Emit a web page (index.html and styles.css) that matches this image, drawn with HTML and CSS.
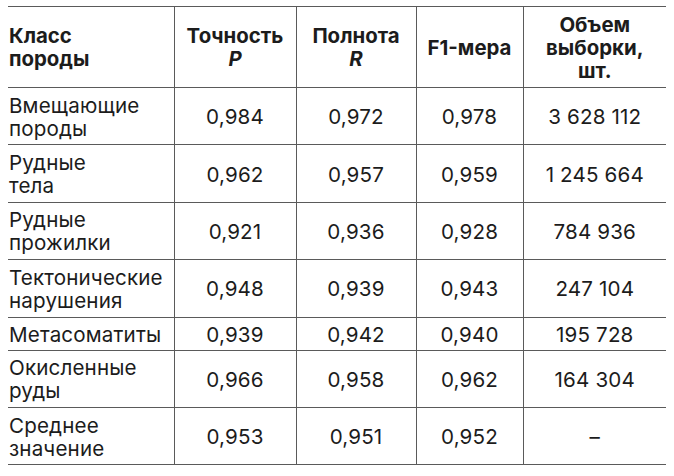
FILE: index.html
```html
<!DOCTYPE html>
<html lang="ru">
<head>
<meta charset="utf-8">
<title>Таблица</title>
<link rel="stylesheet" href="styles.css">
</head>
<body>
<table class="metrics">
  <colgroup>
    <col class="c1"><col class="c2"><col class="c3"><col class="c4"><col class="c5">
  </colgroup>
  <thead>
    <tr class="head">
      <th class="name">Класс<br>породы</th>
      <th>Точность<br><i>P</i></th>
      <th>Полнота<br><i>R</i></th>
      <th>F1-мера</th>
      <th>Объем<br>выборки,<br>шт.</th>
    </tr>
  </thead>
  <tbody>
    <tr class="two"><td class="name">Вмещающие<br>породы</td><td>0,984</td><td>0,972</td><td>0,978</td><td>3 628 112</td></tr>
    <tr class="two"><td class="name">Рудные<br>тела</td><td>0,962</td><td>0,957</td><td>0,959</td><td>1 245 664</td></tr>
    <tr class="two"><td class="name">Рудные<br>прожилки</td><td>0,921</td><td>0,936</td><td>0,928</td><td>784 936</td></tr>
    <tr class="two"><td class="name">Тектонические<br>нарушения</td><td>0,948</td><td>0,939</td><td>0,943</td><td>247 104</td></tr>
    <tr class="one"><td class="name">Метасоматиты</td><td>0,939</td><td>0,942</td><td>0,940</td><td>195 728</td></tr>
    <tr class="two"><td class="name">Окисленные<br>руды</td><td>0,966</td><td>0,958</td><td>0,962</td><td>164 304</td></tr>
    <tr class="two"><td class="name">Среднее<br>значение</td><td>0,953</td><td>0,951</td><td>0,952</td><td>–</td></tr>
  </tbody>
</table>
</body>
</html>
```
FILE: styles.css
```css
html, body {
  margin: 0;
  background: #ffffff;
}
body {
  padding: 6px 8px 0 8px;
  font-family: Inter, "Noto Sans", sans-serif;
  color: #1c1c1c;
}
.metrics {
  width: 658px;
  border-collapse: collapse;
  table-layout: fixed;
  font-size: 20.6px;
  line-height: 23px;
  letter-spacing: 0.15px;
}
.c1 { width: 166px; }
.c2 { width: 122px; }
.c3 { width: 120px; }
.c4 { width: 107px; }
.c5 { width: 143px; }
.metrics th,
.metrics td {
  padding: 0;
  text-align: center;
  vertical-align: middle;
  border-left: 1px solid #5a5a5a;
  border-top: 1px solid #5a5a5a;
  border-bottom: 1px solid #5a5a5a;
}
.metrics th:first-child,
.metrics td:first-child {
  border-left: none;
}
.metrics th {
  font-weight: 700;
  font-size: 20.4px;
  line-height: 23px;
  letter-spacing: 0;
}
.metrics .name {
  text-align: left;
  padding-left: 1px;
}
.metrics td {
  padding-top: 1px;
}
.head { height: 81px; }
.two { height: 57.4px; }
.one { height: 33px; }
```
